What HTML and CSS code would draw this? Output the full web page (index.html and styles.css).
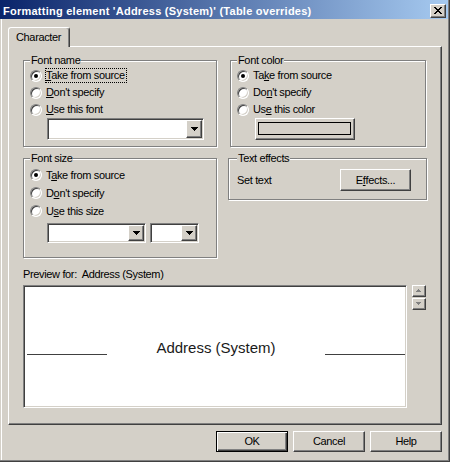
FILE: index.html
```html
<!DOCTYPE html>
<html>
<head>
<meta charset="utf-8">
<title>Formatting element</title>
<link rel="stylesheet" href="styles.css">
</head>
<body>
<div class="window">
  <div class="titlebar">
    <span class="title">Formatting element 'Address (System)' (Table overrides)</span>
    <span class="close raised"><svg width="8" height="7" viewBox="0 0 8 7" shape-rendering="crispEdges"><path d="M0 0h2v1h-2zM6 0h2v1h-2zM1 1h2v1h-2zM5 1h2v1h-2zM2 2h4v1h-4zM3 3h2v1h-2zM2 4h4v1h-4zM1 5h2v1h-2zM5 5h2v1h-2zM0 6h2v1h-2zM6 6h2v1h-2z" fill="#000"/></svg></span>
  </div>
  <div class="content">
    <div class="tabs"><div class="tab">Character</div></div>
    <div class="panel">
      <div class="groups">
        <fieldset class="group g-name">
          <legend>Font name</legend>
          <div class="opt"><span class="radio on"></span><span class="lbl focus"><u>T</u>ake from source</span></div>
          <div class="opt"><span class="radio"></span><span class="lbl"><u>D</u>on't specify</span></div>
          <div class="opt"><span class="radio"></span><span class="lbl"><u>U</u>se this font</span></div>
          <div class="combo c-name"><span class="drop raised"><svg width="7" height="4" viewBox="0 0 7 4" shape-rendering="crispEdges"><path d="M0 0h7v1h-1v1h-1v1h-1v1h-1v-1h-1v-1h-1v-1h-1z" fill="#000"/></svg></span></div>
        </fieldset>
        <fieldset class="group g-color">
          <legend>Font color</legend>
          <div class="opt"><span class="radio on"></span><span class="lbl">Ta<u>k</u>e from source</span></div>
          <div class="opt"><span class="radio"></span><span class="lbl">Do<u>n</u>'t specify</span></div>
          <div class="opt"><span class="radio"></span><span class="lbl">Us<u>e</u> this color</span></div>
          <div class="colorbtn raised"><span class="swatch"></span></div>
        </fieldset>
        <fieldset class="group g-size">
          <legend>Font size</legend>
          <div class="opt"><span class="radio on"></span><span class="lbl">T<u>a</u>ke from source</span></div>
          <div class="opt"><span class="radio"></span><span class="lbl">D<u>o</u>n't specify</span></div>
          <div class="opt"><span class="radio"></span><span class="lbl">U<u>s</u>e this size</span></div>
          <div class="combos">
            <div class="combo c-size1"><span class="drop raised"><svg width="7" height="4" viewBox="0 0 7 4" shape-rendering="crispEdges"><path d="M0 0h7v1h-1v1h-1v1h-1v1h-1v-1h-1v-1h-1v-1h-1z" fill="#000"/></svg></span></div>
            <div class="combo c-size2"><span class="drop raised"><svg width="7" height="4" viewBox="0 0 7 4" shape-rendering="crispEdges"><path d="M0 0h7v1h-1v1h-1v1h-1v1h-1v-1h-1v-1h-1v-1h-1z" fill="#000"/></svg></span></div>
          </div>
        </fieldset>
        <fieldset class="group g-effects">
          <legend>Text effects</legend>
          <div class="effects-row">
            <span>Set text</span>
            <span class="btn effects raised">E<u>f</u>fects...</span>
          </div>
        </fieldset>
      </div>
      <div class="preview-label">Preview for:&nbsp; Address (System)</div>
      <div class="preview-row">
        <div class="preview">
          <span class="pline"></span>
          <span class="ptext">Address (System)</span>
          <span class="pline"></span>
        </div>
        <div class="spin">
          <span class="spinbtn raised"><svg width="5" height="3" viewBox="0 0 5 3" shape-rendering="crispEdges"><path d="M2 0h1v1h1v1h1v1h-5v-1h1v-1h1z" fill="#808080"/></svg></span>
          <span class="spinbtn raised"><svg width="5" height="3" viewBox="0 0 5 3" shape-rendering="crispEdges"><path d="M0 0h5v1h-1v1h-1v1h-1v-1h-1v-1h-1z" fill="#808080"/></svg></span>
        </div>
      </div>
    </div>
    <div class="buttons">
      <span class="btn dlg default">OK</span>
      <span class="btn dlg raised">Cancel</span>
      <span class="btn dlg raised">Help</span>
    </div>
  </div>
</div>
</body>
</html>
```

FILE: styles.css
```css
* { box-sizing: border-box; }
html, body { margin: 0; padding: 0; }
body {
  width: 450px;
  height: 462px;
  overflow: hidden;
  background: #d4d0c8;
  font-family: "Liberation Sans", Arial, sans-serif;
  font-size: 11px;
  letter-spacing: -0.35px;
  color: #000;
}
.window {
  width: 450px;
  height: 462px;
  background: #d4d0c8;
  box-shadow: inset -1px -1px 0 #404040, inset -2px -2px 0 #808080, inset 1px 0 0 #d4d0c8, inset 2px 0 0 #fff;
}
.raised {
  background: #d4d0c8;
  border: 1px solid;
  border-color: #fff #404040 #404040 #fff;
  box-shadow: inset -1px -1px 0 #808080;
}
.titlebar {
  display: flex;
  align-items: flex-start;
  width: 448px;
  height: 19px;
  padding: 4px 2px 0 3px;
  background: linear-gradient(to right, #0a246a, #a6caf0);
  color: #fff;
  font-weight: bold;
  letter-spacing: 0.25px;
  line-height: 15px;
}
.title { flex: 1; white-space: nowrap; }
.close {
  width: 16px;
  height: 14px;
  display: flex;
  align-items: center;
  justify-content: center;
  padding: 0 1px 1px 0;
}
.close svg { display: block; }
.content { padding: 8px 8px 0; }
.tabs { display: flex; }
.tab {
  position: relative;
  z-index: 1;
  width: 62px;
  height: 20px;
  margin-bottom: -1px;
  padding: 3px 0 0 7px;
  line-height: 13px;
  background: #d4d0c8;
  border-top: 1px solid #fff;
  border-left: 1px solid #fff;
  border-right: 1px solid #404040;
  border-radius: 3px 3px 0 0;
  box-shadow: inset -1px 0 0 #808080;
}
.panel {
  border: 1px solid;
  border-color: #fff #404040 #404040 #fff;
  box-shadow: inset -1px -1px 0 #808080;
  padding: 7px 14px 16px 14px;
}
.groups {
  display: grid;
  grid-template-columns: 194px 199px;
  column-gap: 11px;
  row-gap: 5px;
  align-items: start;
}
.group {
  margin: 0;
  min-width: 0;
  padding: 0 0 6px 6px;
  border: 1px solid #808080;
  box-shadow: inset 1px 1px 0 #fff, 1px 1px 0 #fff;
}
.group legend {
  margin: 0;
  padding: 0 1px;
  line-height: 13px;
  background: #d4d0c8;
}
.g-color { margin: 0 1px 0 2px; }
.g-size { padding-top: 1px; padding-bottom: 14px; }
.g-effects { padding: 4px 15px 8px 8px; }
.opt {
  display: flex;
  align-items: center;
  height: 17px;
}
.g-size .opt { height: 18px; }
.radio {
  position: relative;
  width: 12px;
  height: 12px;
  margin-right: 4px;
  border-radius: 50%;
  background: #fff;
  border: 1px solid;
  border-color: #808080 #fff #fff #808080;
  box-shadow: inset 1px 1px 0 #404040, inset -1px -1px 0 #d4d0c8;
  flex: none;
}
.radio.on::after {
  content: "";
  position: absolute;
  left: 3px;
  top: 3px;
  width: 4px;
  height: 4px;
  border-radius: 50%;
  background: #000;
}
.lbl { line-height: 13px; white-space: nowrap; }
.focus { outline: 1px dotted #000; outline-offset: 0; padding: 0 1px 0 0; }
.combo {
  display: flex;
  justify-content: flex-end;
  height: 22px;
  padding: 1px;
  background: #fff;
  border: 1px solid;
  border-color: #808080 #fff #fff #808080;
  box-shadow: inset 1px 1px 0 #404040, inset -1px -1px 0 #d4d0c8;
}
.c-name { width: 157px; margin-left: 17px; }
.drop {
  width: 16px;
  height: 100%;
  display: flex;
  align-items: center;
  justify-content: center;
}
.drop svg, .spinbtn svg { display: block; }
.combos {
  display: flex;
  gap: 4px;
  margin: 3px 0 0 17px;
}
.combos .combo { height: 20px; }
.c-size1 { width: 99px; }
.c-size2 { width: 49px; }
.colorbtn {
  width: 100px;
  height: 22px;
  margin-left: 18px;
  padding: 3px 3px 4px 2px;
  display: flex;
}
.swatch {
  flex: 1;
  border: 1px solid #000;
  background: #d4d0c8;
}
.effects-row {
  display: flex;
  align-items: center;
  justify-content: space-between;
  height: 22px;
}
.btn {
  display: flex;
  align-items: center;
  justify-content: center;
  line-height: 13px;
}
.effects { width: 71px; height: 22px; }
.preview-label {
  margin-top: 10px;
  line-height: 13px;
  white-space: nowrap;
}
.preview-row {
  display: flex;
  align-items: flex-start;
  gap: 5px;
  margin-top: 4px;
}
.preview {
  display: flex;
  align-items: center;
  width: 384px;
  height: 123px;
  padding: 3px 1px 0 3px;
  background: #fff;
  border: 1px solid;
  border-color: #808080 #fff #fff #808080;
  box-shadow: inset 1px 1px 0 #404040, inset -1px -1px 0 #d4d0c8;
}
.pline {
  width: 80px;
  height: 1px;
  margin-top: 13px;
  background: #404040;
  flex: none;
}
.ptext {
  flex: 1;
  text-align: center;
  font-size: 15px;
  line-height: 18px;
  letter-spacing: 0;
  color: #1a1a1a;
}
.spin {
  display: flex;
  flex-direction: column;
  gap: 1px;
}
.spinbtn {
  width: 14px;
  height: 12px;
  display: flex;
  align-items: center;
  justify-content: center;
  padding: 0 1px 1px 0;
}
.buttons {
  display: flex;
  justify-content: flex-end;
  gap: 5px;
  margin-top: 6px;
}
.dlg { width: 72px; height: 21px; }
.default {
  background: #d4d0c8;
  border: 1px solid #000;
  box-shadow: inset 1px 1px 0 #fff, inset -1px -1px 0 #404040, inset -2px -2px 0 #808080;
}
```
